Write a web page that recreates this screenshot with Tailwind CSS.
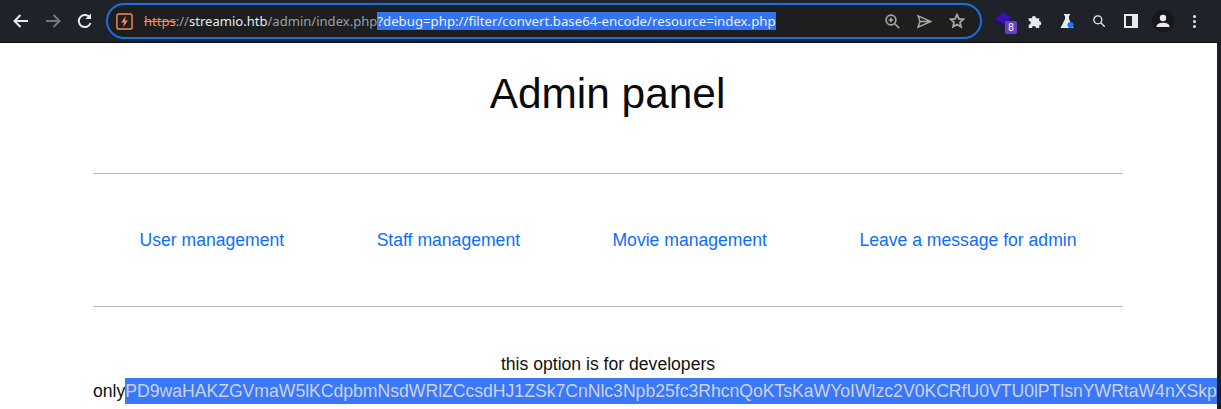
<!DOCTYPE html>
<html><head><meta charset="utf-8"><script src="https://cdn.jsdelivr.net/npm/@tailwindcss/browser@4"></script></head>
<body class="w-[1221px] h-[409px] overflow-hidden bg-white font-['Liberation_Sans',sans-serif]">
<header class="h-[42px] bg-[#20222a] flex items-center border-b border-[#0c0d10] box-content">
<div class="flex items-center w-[106px] shrink-0 pl-[11px] gap-[12px]">
<svg class="w-5 h-5" viewBox="0 0 20 20" fill="none" stroke="#e8eaed" stroke-width="2"><path d="M17 10H4M9.500 4L3.500 10l6 6"/></svg>
<svg class="w-5 h-5" viewBox="0 0 20 20" fill="none" stroke="#75777a" stroke-width="2"><path d="M3 10h13M10.500 4l6 6-6 6"/></svg>
<svg class="w-5 h-5" viewBox="0 0 20 20" fill="none" stroke="#e8eaed" stroke-width="2"><path d="M15.500 12a6 6 0 1 1-.5-5"/><path d="M16 2.500v5.500h-5.500" fill="#e8eaed" stroke="none"/></svg>
</div>
<div class="w-[876px] h-[36px] shrink-0 rounded-[18px] border-2 border-[#1a6fd8] bg-[#1d1e20] flex items-center pl-[8px] pr-[15px] font-['Noto_Sans',sans-serif]">
<svg class="w-[17px] h-[17px] shrink-0" viewBox="0 0 18 18" fill="none"><rect x="1" y="1" width="16" height="16" rx="2" stroke="#f28b60" stroke-width="1.500"/><path d="M10.500 3L5.500 10h3L7.500 15l5-7h-3z" fill="#f28b60"/></svg>
<div class="ml-[11px] whitespace-nowrap text-[13.050px] leading-[18px] text-[#9aa0a6]"><span class="text-[#f28b60] line-through">https</span>://<span class="text-[#e8eaed]">streamio.htb</span>/admin/index.php<span class="bg-[#3574f0] text-[#e8f0fe] inline-block text-[13.220px]">?debug=php://filter/convert.base64-encode/resource=index.php</span></div>
<div class="ml-auto flex items-center gap-[17px]">
<svg class="w-[15px] h-[15px]" viewBox="0 0 20 20" fill="none" stroke="#a8a8a8" stroke-width="2.200"><circle cx="8" cy="8" r="6.500"/><path d="M13 13l6 6M5 8h6M8 5v6"/></svg>
<svg class="w-[15px] h-[15px]" viewBox="0 0 20 20" fill="none" stroke="#a8a8a8" stroke-width="2"><path d="M1.500 2.500l17 7.500-17 7.500 2.500-7.500zM4 10h14"/></svg>
<svg class="w-4 h-4" viewBox="0 0 20 20" fill="none" stroke="#a8a8a8" stroke-width="2.200"><path d="M10 2l2.400 5.300 5.600.6-4.200 3.800 1.200 5.600-5-2.900-5 2.900 1.200-5.600-4.200-3.800 5.600-.6z"/></svg>
</div></div>
<div class="flex-1 flex items-center relative h-full">
<div class="relative w-[22px] h-[23px] ml-[13px] mt-[2px]"><svg class="w-[17px] h-[17px] absolute left-0 top-0" viewBox="0 0 17 17"><path d="M0 8l8-7 9 5.500-8 6.500z" fill="#3b12b0"/><path d="M0 8l9 5v3.500l-9-5z" fill="#25105f"/></svg><span class="absolute right-0 bottom-0 w-3 h-[13px] rounded-[2px] bg-[#6a3fc4] text-[10px] leading-[13px] text-center text-white">8</span></div>
<svg class="w-[14px] h-[14px] ml-[11px]" viewBox="0 0 20 20" fill="#e8eaed"><path d="M1 6h4.500a3 3 0 1 1 6 0H16v4.500a3 3 0 1 1 0 6V20h-4.500a3 3 0 1 0-6 0H1v-4.500a3 3 0 1 0 0-6z"/></svg>
<svg class="w-[14px] h-[14px] ml-[18px]" viewBox="0 0 14 14"><path d="M4 0h6v1.500H9V5l4.500 9H.500L5 5V1.500H4z" fill="#e8eaed"/><circle cx="10.500" cy="11" r="3" fill="#1a73e8"/></svg>
<svg class="w-3 h-3 ml-[19px]" viewBox="0 0 12 12" fill="none" stroke="#e8eaed" stroke-width="1.300"><circle cx="4.800" cy="4.800" r="4"/><path d="M7.800 7.800l4 4"/></svg>
<svg class="w-[14px] h-[14px] ml-[19px]" viewBox="0 0 14 14"><rect width="14" height="14" fill="#e8eaed"/><rect x="2" y="2" width="6" height="10" fill="#20222a"/></svg>
<div class="w-[22px] h-[22px] rounded-full bg-[#17181c] ml-[14px] flex items-center justify-center"><svg class="w-3.5 h-3.5" viewBox="0 0 14 14" fill="#e8eaed"><circle cx="7" cy="4" r="3.200"/><path d="M0.500 13c0-3 3-4.300 6.500-4.300s6.500 1.300 6.500 4.300z"/></svg></div>
<div class="ml-[19px] flex flex-col gap-[2px]"><i class="block w-[3px] h-[3px] rounded-full bg-[#e8eaed]"></i><i class="block w-[3px] h-[3px] rounded-full bg-[#e8eaed]"></i><i class="block w-[3px] h-[3px] rounded-full bg-[#e8eaed]"></i></div>
</div>
</header>
<div class="flex h-[366px]">
<main class="w-[1217px] shrink-0 overflow-hidden">
<h1 class="text-center text-[42.400px] leading-[52px] pt-[25px] text-[#0a0a0a] h-[130px] w-[1215px]">Admin panel</h1>
<div class="ml-[93px] w-[1030px] border-t border-[#bdbdbd] border-b h-[134px] flex items-center justify-between pl-[46.500px] pr-[46.500px] text-[17.600px] text-[#0d6efd]">
<a>User management</a><a>Staff management</a><a>Movie management</a><a>Leave a message for admin</a>
</div>
<div class="mt-[46px] text-center text-[17.600px] leading-[22px] w-[1030px] ml-[93px] text-[#111]">this option is for developers</div>
<div class="ml-[93px] mt-[3px] whitespace-nowrap text-[17.600px] leading-[26px] text-[#111]">only<span class="inline-block bg-[#3a78fb] text-[#ccd3de]">PD9waHAKZGVmaW5lKCdpbmNsdWRlZCcsdHJ1ZSk7CnNlc3Npb25fc3RhcnQoKTsKaWYoIWlzc2V0KCRfU0VTU0lPTlsnYWRtaW4nXSkp</span></div>
</main>
<div class="flex-1 bg-[#1c1e24]"></div>
</div>
</body></html>
